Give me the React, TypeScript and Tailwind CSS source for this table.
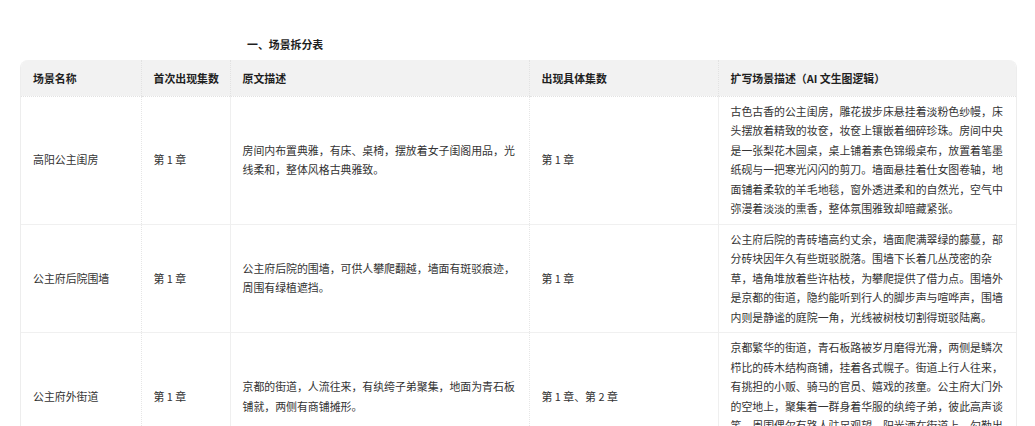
import React from 'react';

type Row = {
    name: string;
    first: string;
    source: string;
    chapters: string;
    expanded: string;
};

const rows: Row[] = [
    {
        name: '高阳公主闺房',
        first: '第 1 章',
        source: '房间内布置典雅，有床、桌椅，摆放着女子闺阁用品，光线柔和，整体风格古典雅致。',
        chapters: '第 1 章',
        expanded:
            '古色古香的公主闺房，雕花拔步床悬挂着淡粉色纱幔，床头摆放着精致的妆奁，妆奁上镶嵌着细碎珍珠。房间中央是一张梨花木圆桌，桌上铺着素色锦缎桌布，放置着笔墨纸砚与一把寒光闪闪的剪刀。墙面悬挂着仕女图卷轴，地面铺着柔软的羊毛地毯，窗外透进柔和的自然光，空气中弥漫着淡淡的熏香，整体氛围雅致却暗藏紧张。',
    },
    {
        name: '公主府后院围墙',
        first: '第 1 章',
        source: '公主府后院的围墙，可供人攀爬翻越，墙面有斑驳痕迹，周围有绿植遮挡。',
        chapters: '第 1 章',
        expanded:
            '公主府后院的青砖墙高约丈余，墙面爬满翠绿的藤蔓，部分砖块因年久有些斑驳脱落。围墙下长着几丛茂密的杂草，墙角堆放着些许枯枝，为攀爬提供了借力点。围墙外是京都的街道，隐约能听到行人的脚步声与喧哗声，围墙内则是静谧的庭院一角，光线被树枝切割得斑驳陆离。',
    },
    {
        name: '公主府外街道',
        first: '第 1 章',
        source: '京都的街道，人流往来，有纨绔子弟聚集，地面为青石板铺就，两侧有商铺摊形。',
        chapters: '第 1 章、第 2 章',
        expanded:
            '京都繁华的街道，青石板路被岁月磨得光滑，两侧是鳞次栉比的砖木结构商铺，挂着各式幌子。街道上行人往来，有挑担的小贩、骑马的官员、嬉戏的孩童。公主府大门外的空地上，聚集着一群身着华服的纨绔子弟，彼此高声谈笑，周围偶尔有路人驻足观望，阳光洒在街道上，勾勒出热闹而喧嚣的市井气息。',
    },
];

const headers = ['场景名称', '首次出现集数', '原文描述', '出现具体集数', '扩写场景描述（AI 文生图逻辑）'];

export default function App() {
    return (
        <div
            className="min-h-[426px] bg-white pt-[34px] text-[10.9px] text-[#333333]"
            style={{ fontFamily: '"Noto Sans CJK SC", "Noto Sans", sans-serif' }}
        >
            <h3 className="h-[20px] pl-[247px] text-[10.9px] font-bold leading-[20px] text-[#1f1f1f]">
                一、场景拆分表
            </h3>

            <div className="ml-[20px] mt-[6px] w-[997px] overflow-hidden rounded-t-[8px] border-x border-[#ededed]">
                <table className="w-full table-fixed border-collapse">
                    <colgroup>
                        <col className="w-[120px]" />
                        <col className="w-[89px]" />
                        <col className="w-[299px]" />
                        <col className="w-[189px]" />
                        <col />
                    </colgroup>
                    <thead>
                        <tr className="h-[36px] bg-[#f2f2f2]">
                            {headers.map((h, i) => (
                                <th
                                    key={h}
                                    className={`whitespace-nowrap border-b border-dotted border-[#e2e2e2] px-3 text-left align-middle text-[10.9px] font-bold text-[#1f1f1f] ${
                                        i > 0 ? 'border-l' : ''
                                    }`}
                                >
                                    {h}
                                </th>
                            ))}
                        </tr>
                    </thead>
                    <tbody>
                        {rows.map((r) => (
                            <tr key={r.name} className="border-b border-[#f0f0f0]">
                                <td className="px-3 py-[5px] align-middle leading-[19.5px]">{r.name}</td>
                                <td className="border-l border-dotted border-[#e6e6e6] px-3 py-[5px] align-middle leading-[19.5px]">
                                    {r.first}
                                </td>
                                <td className="border-l border-[#efefef] px-3 py-[5px] align-middle leading-[19.5px]">
                                    {r.source}
                                </td>
                                <td className="border-l border-dotted border-[#e6e6e6] px-3 py-[5px] align-middle leading-[19.5px]">
                                    {r.chapters}
                                </td>
                                <td className="border-l border-[#efefef] px-3 py-[5px] align-middle leading-[19.5px]">
                                    {r.expanded}
                                </td>
                            </tr>
                        ))}
                    </tbody>
                </table>
            </div>
        </div>
    );
}
